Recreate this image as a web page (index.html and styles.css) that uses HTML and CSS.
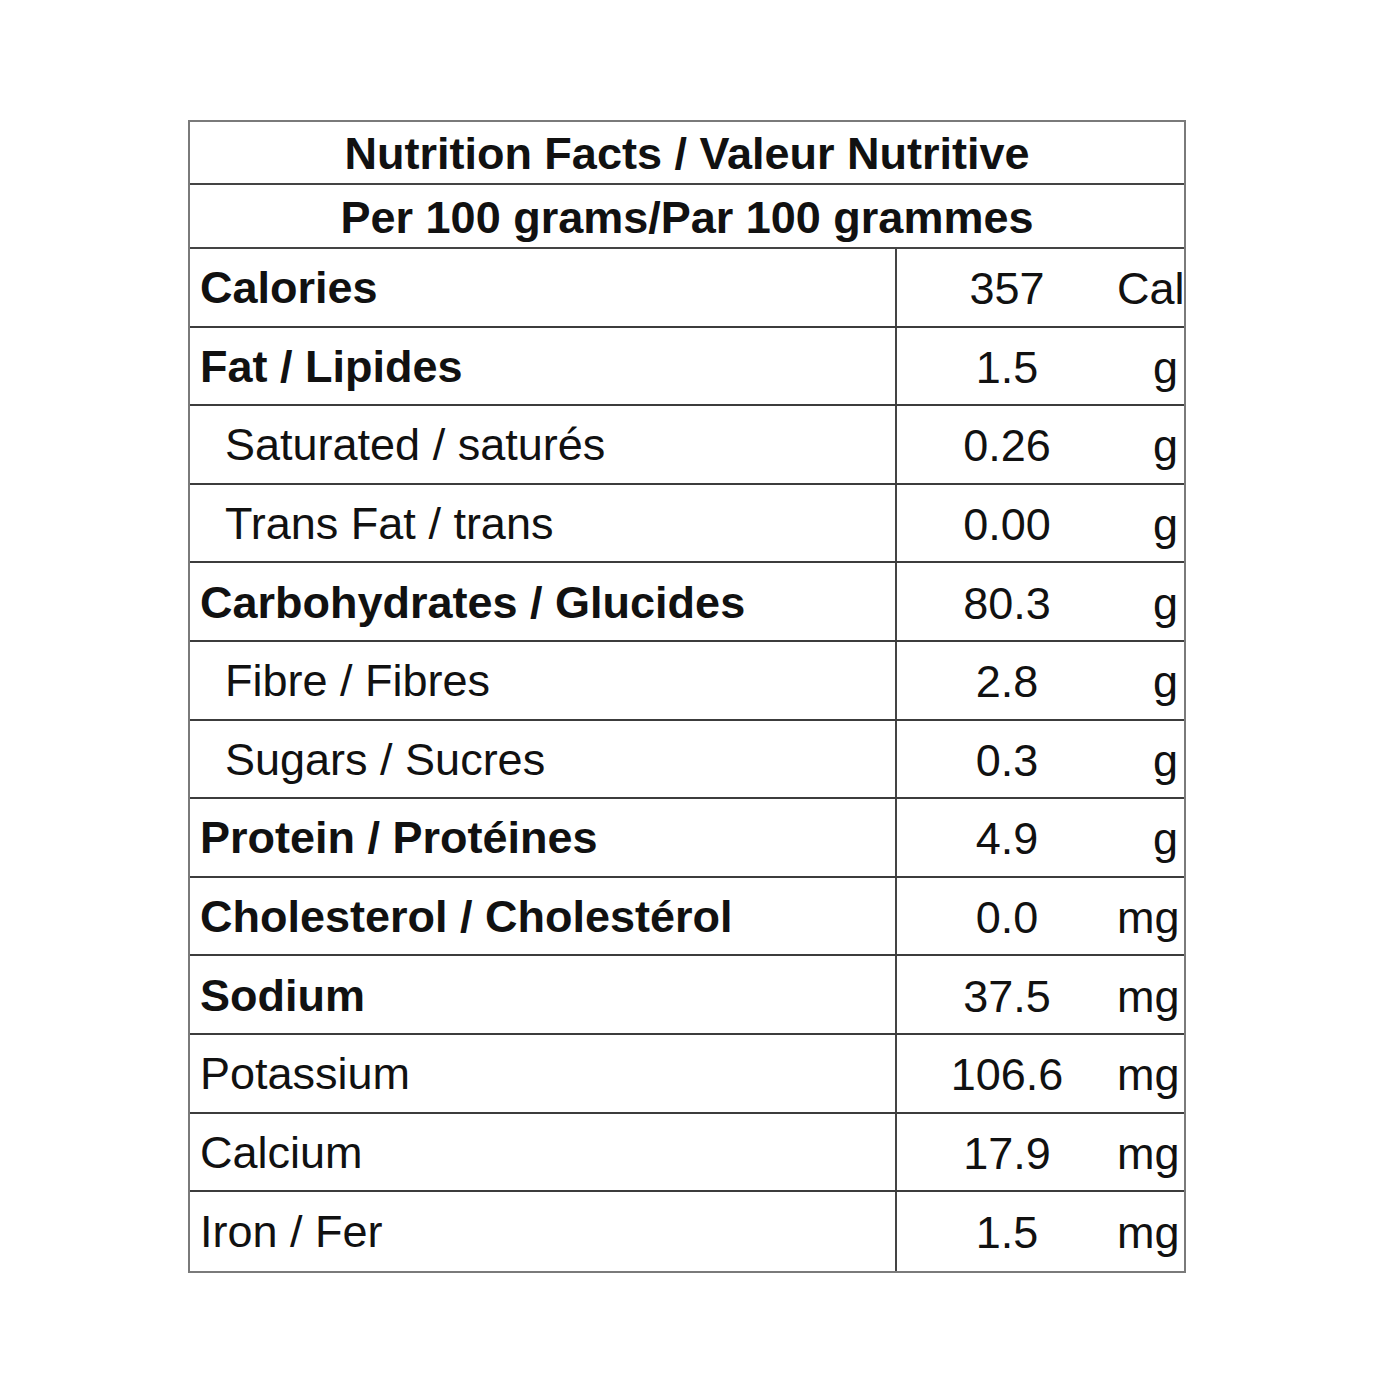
FILE: index.html
```html
<!DOCTYPE html>
<html lang="en">
<head>
<meta charset="utf-8">
<title>Nutrition Facts / Valeur Nutritive</title>
<link rel="stylesheet" href="styles.css">
</head>
<body>
<div class="label">
  <div class="head head-1">Nutrition Facts / Valeur Nutritive</div>
  <div class="head head-2">Per 100 grams/Par 100 grammes</div>

  <div class="row"><div class="name bold">Calories</div><div class="amt"><span class="val">357</span><span class="unit">Cal</span></div></div>
  <div class="row"><div class="name bold">Fat / Lipides</div><div class="amt"><span class="val">1.5</span><span class="unit">g</span></div></div>
  <div class="row"><div class="name sub">Saturated / saturés</div><div class="amt"><span class="val">0.26</span><span class="unit">g</span></div></div>
  <div class="row"><div class="name sub">Trans Fat / trans</div><div class="amt"><span class="val">0.00</span><span class="unit">g</span></div></div>
  <div class="row"><div class="name bold">Carbohydrates / Glucides</div><div class="amt"><span class="val">80.3</span><span class="unit">g</span></div></div>
  <div class="row"><div class="name sub">Fibre / Fibres</div><div class="amt"><span class="val">2.8</span><span class="unit">g</span></div></div>
  <div class="row"><div class="name sub">Sugars / Sucres</div><div class="amt"><span class="val">0.3</span><span class="unit">g</span></div></div>
  <div class="row"><div class="name bold">Protein / Protéines</div><div class="amt"><span class="val">4.9</span><span class="unit">g</span></div></div>
  <div class="row"><div class="name bold">Cholesterol / Cholestérol</div><div class="amt"><span class="val">0.0</span><span class="unit">mg</span></div></div>
  <div class="row"><div class="name bold">Sodium</div><div class="amt"><span class="val">37.5</span><span class="unit">mg</span></div></div>
  <div class="row"><div class="name">Potassium</div><div class="amt"><span class="val">106.6</span><span class="unit">mg</span></div></div>
  <div class="row"><div class="name">Calcium</div><div class="amt"><span class="val">17.9</span><span class="unit">mg</span></div></div>
  <div class="row last"><div class="name">Iron / Fer</div><div class="amt"><span class="val">1.5</span><span class="unit">mg</span></div></div>
</div>
</body>
</html>
```

FILE: styles.css
```css
html, body {
  margin: 0;
  background: #ffffff;
}

body {
  padding: 120px 0 0 188px;
  font-family: "Liberation Sans", Arial, sans-serif;
  color: #111111;
}

.label {
  width: 998px;
  box-sizing: border-box;
  border: 2px solid #7a7a7a;
  display: flex;
  flex-direction: column;
}

.head {
  display: flex;
  align-items: center;
  justify-content: center;
  box-sizing: border-box;
  border-bottom: 2px solid #444444;
  font-weight: bold;
  font-size: 45px;
  line-height: 1;
  padding-top: 2px;
}

.head-1 { height: 63px; }
.head-2 { height: 64px; }

.row {
  display: grid;
  grid-template-columns: 705px 1fr;
  height: 78.6px;
  box-sizing: border-box;
  border-bottom: 2px solid #3c3c3c;
}

.row.last { border-bottom: none; }

.name {
  display: flex;
  align-items: center;
  padding-left: 10px;
  padding-top: 2px;
  font-size: 45px;
}

.name.bold { font-weight: bold; }
.name.sub { padding-left: 35px; }

.amt {
  display: grid;
  grid-template-columns: 220px 1fr;
  align-items: center;
  border-left: 2px solid #444444;
  font-size: 45px;
  padding-right: 6px;
}

.val {
  text-align: center;
  padding-top: 4px;
}

.unit {
  text-align: right;
  padding-top: 4px;
}
```
